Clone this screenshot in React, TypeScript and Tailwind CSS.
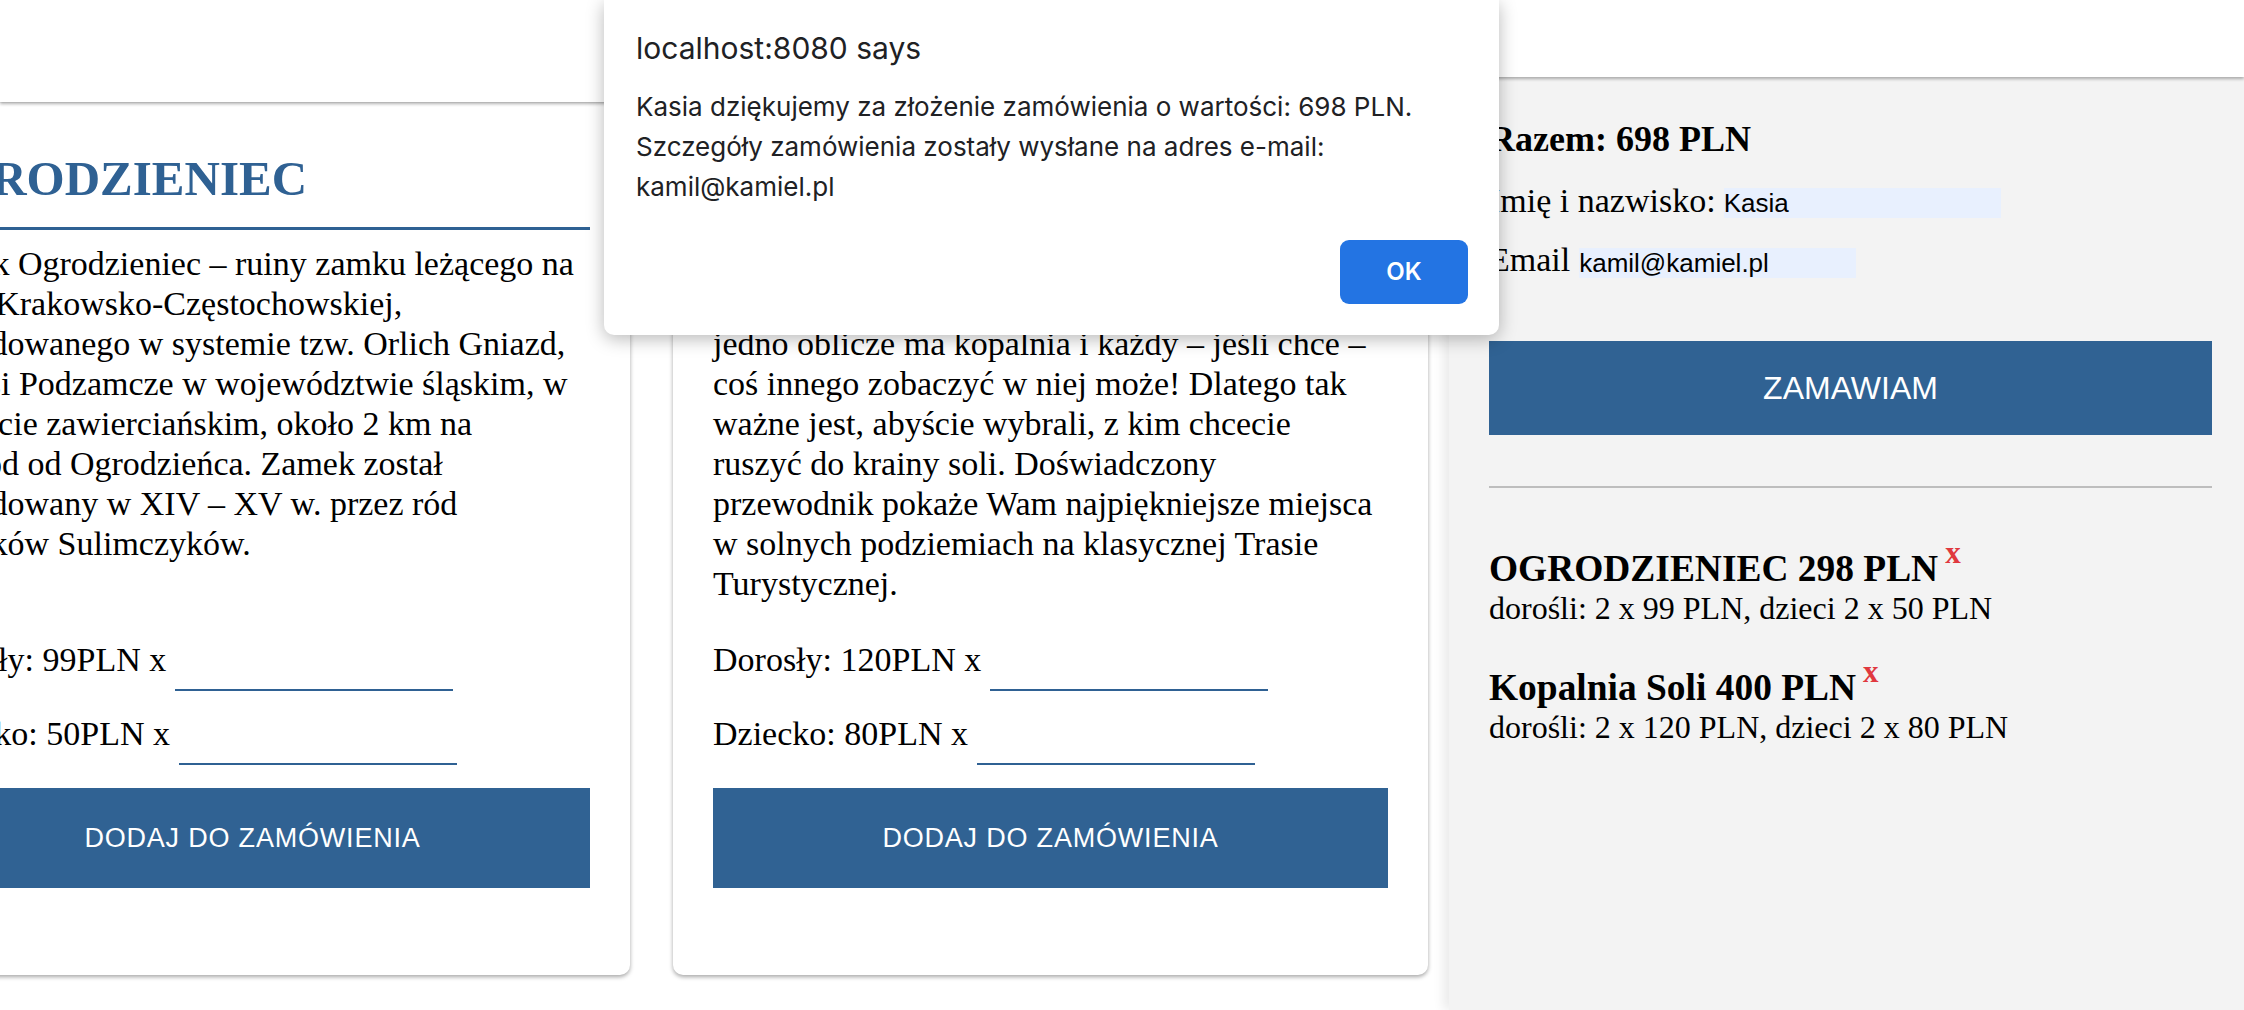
import React from 'react';

const ogrodzieniecLines = [
  'Zamek Ogrodzieniec – ruiny zamku leżącego na',
  'Jurze Krakowsko-Częstochowskiej,',
  'wybudowanego w systemie tzw. Orlich Gniazd,',
  'we wsi Podzamcze w województwie śląskim, w',
  'powiecie zawierciańskim, około 2 km na',
  'wschód od Ogrodzieńca. Zamek został',
  'wybudowany w XIV – XV w. przez ród',
  'Włodków Sulimczyków.',
];

const kopalniaLines = [
  'Kopalnia Soli „Wieliczka” to jedna z najstarszych',
  'kopalń soli na świecie. Nie',
  'jedno oblicze ma kopalnia i każdy – jeśli chce –',
  'coś innego zobaczyć w niej może! Dlatego tak',
  'ważne jest, abyście wybrali, z kim chcecie',
  'ruszyć do krainy soli. Doświadczony',
  'przewodnik pokaże Wam najpiękniejsze miejsca',
  'w solnych podziemiach na klasycznej Trasie',
  'Turystycznej.',
];

function QtyRow({ label, gap }: { label: string; gap?: boolean }) {
  return (
    <div className={`flex items-start h-[51px] ${gap ? 'mt-[23px]' : ''}`}>
      <span className="text-[34px] leading-[40px] whitespace-nowrap">{label}</span>
      <input
        className="ml-[9px] h-[51px] w-[278px] border-b-2 border-[#2f6193] bg-transparent outline-none"
        readOnly
      />
    </div>
  );
}

function TourCard({
  title,
  lines,
  adult,
  child,
}: {
  title: string;
  lines: string[];
  adult: number;
  child: number;
}) {
  return (
    <div className="w-[755px] h-[872px] shrink-0 rounded-[10px] bg-white shadow-[0_2px_4px_rgba(0,0,0,0.35)] px-[40px] pt-[48px] pb-[87px] flex flex-col">
      <h2 className="text-[49px] leading-[55px] font-bold text-[#2f6193] pb-[21px] border-b-[3px] border-[#2f6193] whitespace-nowrap">
        {title}
      </h2>
      <div className="mt-[14px] text-[34px] leading-[40px]">
        {lines.map((l) => (
          <div key={l} className="whitespace-nowrap">
            {l}
          </div>
        ))}
      </div>

      <div className="mt-auto flex flex-col">
        <QtyRow label={`Dorosły: ${adult}PLN x`} />
        <QtyRow label={`Dziecko: ${child}PLN x`} gap />
        <button className="mt-[23px] h-[100px] w-full bg-[#306293] text-white font-['Liberation_Sans',Arial,sans-serif] text-[27px] tracking-[0.8px]">
          DODAJ DO ZAMÓWIENIA
        </button>
      </div>
    </div>
  );
}

function OrderItem({ name, price, details, first }: { name: string; price: number; details: string; first?: boolean }) {
  return (
    <div className={first ? 'mt-[59px]' : 'mt-[39px]'}>
      <h3 className="text-[37.44px] leading-[43px] font-bold whitespace-nowrap">
        {name} {price} PLN
        <span className="ml-[7px] align-[18px] leading-[0] text-[31px] font-bold text-[#e0383e]">x</span>
      </h3>
      <p className="text-[32px] leading-[37px] whitespace-nowrap">{details}</p>
    </div>
  );
}

function Sidebar() {
  return (
    <aside className="flex-1 flex flex-col">
      {/* top strip */}
      <div className="h-[77px] bg-white relative z-10 shadow-[0_2px_3px_rgba(0,0,0,0.3)]" />

      <div className="flex-1 bg-[#f3f3f3] pl-[40px] pr-[32px] pt-[41px] shadow-[-6px_0_10px_rgba(0,0,0,0.08)]">
        <h3 className="text-[36px] leading-[43px] font-bold">Razem: 698 PLN</h3>

        <div className="mt-[21px] flex items-start text-[34px] leading-[37px]">
          <span className="whitespace-nowrap">Imię i nazwisko:</span>
          <input
            className="ml-[8px] mt-[6px] h-[30px] w-[277px] bg-[#e8f0fe] outline-none font-['Liberation_Sans',Arial,sans-serif] text-[26px] text-black"
            value="Kasia"
            readOnly
          />
        </div>
        <div className="mt-[22px] flex items-start text-[34px] leading-[37px]">
          <span>Email</span>
          <input
            className="ml-[9px] mt-[7px] h-[30px] w-[277px] bg-[#e8f0fe] outline-none font-['Liberation_Sans',Arial,sans-serif] text-[26px] text-black"
            value="kamil@kamiel.pl"
            readOnly
          />
        </div>

        <button className="mt-[63px] h-[94px] w-full bg-[#306293] text-white font-['Liberation_Sans',Arial,sans-serif] text-[32px]">
          ZAMAWIAM
        </button>

        <div className="mt-[51px] h-[2px] bg-[#bdbdbd]" />

        <OrderItem first name="OGRODZIENIEC" price={298} details="dorośli: 2 x 99 PLN, dzieci 2 x 50 PLN" />
        <OrderItem name="Kopalnia Soli" price={400} details="dorośli: 2 x 120 PLN, dzieci 2 x 80 PLN" />
      </div>
    </aside>
  );
}

function AlertDialog() {
  return (
    <div className="absolute left-[604px] top-0 z-20 w-[895px] h-[335px] bg-white rounded-b-[10px] shadow-[0_4px_18px_rgba(0,0,0,0.28)] pl-[32px] pr-[31px] pt-[30px] pb-[31px] flex flex-col font-['Inter','Liberation_Sans',sans-serif] text-[#202124]">
      <div className="text-[30px] leading-[36px]">localhost:8080 says</div>
      <div className="mt-[21px] text-[26px] leading-[40px]">
        <div>Kasia dziękujemy za złożenie zamówienia o wartości: 698 PLN.</div>
        <div>Szczegóły zamówienia zostały wysłane na adres e-mail:</div>
        <div>kamil@kamiel.pl</div>
      </div>
      <div className="mt-auto flex justify-end">
        <button className="w-[128px] h-[64px] rounded-[9px] bg-[#2374e3] text-white text-[24px] font-semibold">
          OK
        </button>
      </div>
    </div>
  );
}

export default function App() {
  return (
    <div className="relative h-[1010px] w-full overflow-hidden bg-white text-black font-['Liberation_Serif','Times_New_Roman',serif] flex">
      {/* Main content, scrolled sideways */}
      <main className="w-[1449px] shrink-0 flex flex-col overflow-hidden">
        <header className="h-[102px] shrink-0 bg-white relative z-10 shadow-[0_2px_3px_rgba(0,0,0,0.3)]" />
        <div className="pt-[1px] -ml-[125px] flex gap-[43px]">
          <TourCard title="OGRODZIENIEC" lines={ogrodzieniecLines} adult={99} child={50} />
          <TourCard title="KOPALNIA SOLI" lines={kopalniaLines} adult={120} child={80} />
        </div>
      </main>

      <Sidebar />

      <AlertDialog />
    </div>
  );
}
